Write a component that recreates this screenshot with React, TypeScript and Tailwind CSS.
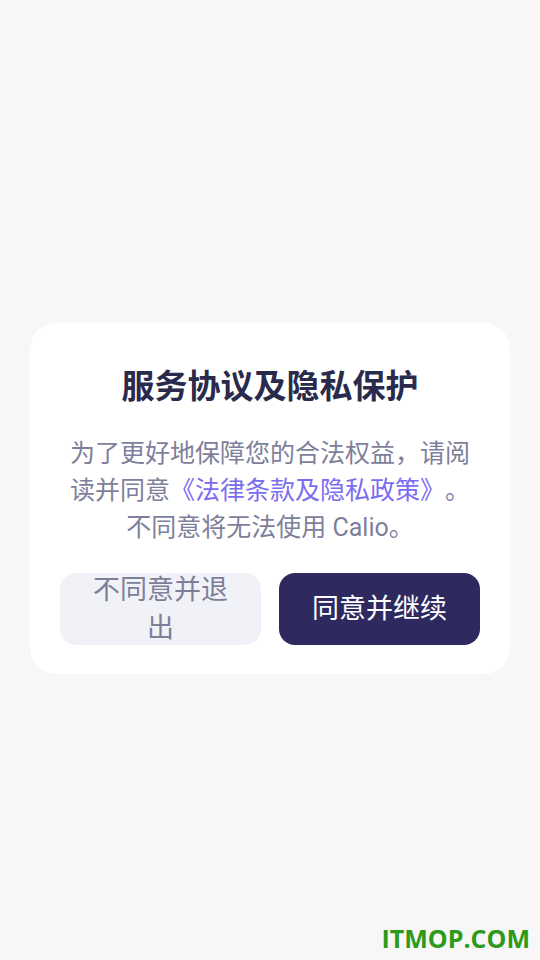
import React from "react";

export default function App() {
  return (
    <div
      className="relative w-[540px] h-[960px] bg-[#f7f7f7] overflow-hidden"
      style={{ fontFamily: "Roboto, 'Noto Sans CJK SC', sans-serif" }}
    >
      <div className="pt-[323px] px-[30px]">
        <div className="bg-white rounded-[26px] px-[30px] pt-[40px] pb-[29px] flex flex-col">
          <h1 className="text-center text-[33px] leading-[48px] font-bold text-[#2a2a4c]">
            服务协议及隐私保护
          </h1>
          <p className="mt-[24px] text-center text-[25px] leading-[37px] text-[#7e7f9b] [text-spacing-trim:space-all]">
            为了更好地保障您的合法权益，请阅读并同意
            <span className="text-[#7b6cf2]">《法律条款及隐私政策》</span>
            。
            <br />
            不同意将无法使用 Calio。
          </p>
          <div className="mt-[27px] flex gap-[18px]">
            <button className="flex-1 h-[72px] rounded-[16px] bg-[#f1f2f8] text-[#7d7f99] text-[27px] leading-[38px] px-[28px] flex items-center justify-center text-center">
              不同意并退出
            </button>
            <button className="flex-1 h-[72px] rounded-[16px] bg-[#2e2a5f] text-white text-[27px] leading-[38px] px-[28px] flex items-center justify-center text-center">
              同意并继续
            </button>
          </div>
        </div>
      </div>
      <div
        className="absolute right-[10px] bottom-[9px] text-[#2d9a1b] text-[25px] font-bold leading-none"
        style={{ fontFamily: "'Open Sans', sans-serif" }}
      >
        ITMOP.COM
      </div>
    </div>
  );
}
